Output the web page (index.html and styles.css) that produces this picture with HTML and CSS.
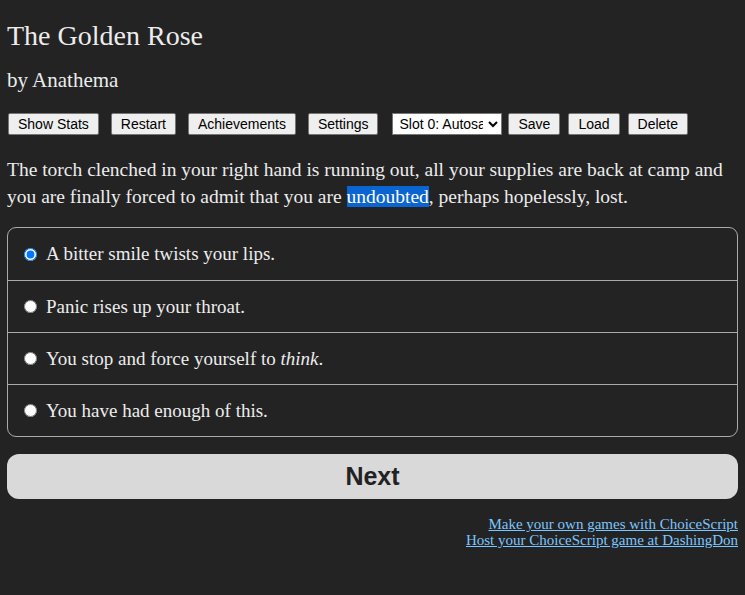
FILE: index.html
```html
<!DOCTYPE html>
<html lang="en">
<head>
    <meta charset="UTF-8">
    <meta name="viewport" content="width=device-width, initial-scale=1.0">
    <title>The Golden Rose</title>
    <link rel="stylesheet" href="styles.css">
</head>
<body>
    <div class="container">
        <h1 class="title">The Golden Rose</h1>
        <h2 class="author">by Anathema</h2>
        <div class="toolbar">
            <button>Show Stats</button>
            <button>Restart</button>
            <button>Achievements</button>
            <button class="wide">Settings</button>
            <select class="slot">
                <option>Slot 0: Autosave</option>
            </select>
            <button class="tight">Save</button>
            <button class="tight">Load</button>
            <button class="tight">Delete</button>
        </div>
        <p class="story">The torch clenched in your right hand is running out, all your supplies are back at camp and you are finally forced to admit that you are <span class="sel">undoubted</span>, perhaps hopelessly, lost.</p>
        <form class="choices">
            <label class="choice"><input type="radio" name="choice" checked><span>A bitter smile twists your lips.</span></label>
            <label class="choice"><input type="radio" name="choice"><span>Panic rises up your throat.</span></label>
            <label class="choice"><input type="radio" name="choice"><span>You stop and force yourself to <i>think</i>.</span></label>
            <label class="choice"><input type="radio" name="choice"><span>You have had enough of this.</span></label>
        </form>
        <button class="next">Next</button>
        <div class="links">
            <a href="#">Make your own games with ChoiceScript</a><br>
            <a href="#">Host your ChoiceScript game at DashingDon</a>
        </div>
    </div>
</body>
</html>
```

FILE: styles.css
```css
body {
    margin: 0;
    background-color: #232323;
    color: #ececec;
    font-family: "Liberation Serif", Georgia, serif;
}

.container {
    padding: 0 7px;
}

.title {
    font-size: 28px;
    font-weight: normal;
    margin: 0;
    padding-top: 21px;
    line-height: 30px;
}

.author {
    font-size: 21px;
    font-weight: normal;
    margin: 0;
    padding-top: 17px;
    line-height: 24px;
}

.toolbar {
    display: flex;
    align-items: center;
    padding-top: 21px;
    padding-left: 1px;
}

.toolbar button,
.toolbar select {
    font-family: Arial, "Liberation Sans", sans-serif;
    font-size: 14px;
    height: 22px;
    margin-right: 12px;
    background-color: #efefef;
    color: #000;
    border: 1px solid #767676;
    border-radius: 2px;
    padding: 0 9px;
}

.toolbar .wide {
    margin-right: 14px;
}

.toolbar select {
    width: 110px;
    padding: 0 2px;
    background-color: #fff;
    margin-right: 6px;
    border-radius: 0;
}

.toolbar .tight {
    margin-right: 8px;
}

.story {
    font-size: 19.5px;
    line-height: 27px;
    margin: 0;
    padding-top: 21px;
}

.sel {
    background-color: #0a64d2;
    color: #fff;
}

.choices {
    margin-top: 17px;
    border: 1px solid #aaa;
    border-radius: 9px;
}

.choice {
    display: flex;
    align-items: center;
    box-sizing: border-box;
    height: 52px;
    padding-left: 16px;
    font-size: 19px;
    border-top: 1px solid #aaa;
}

.choice:first-child {
    border-top: none;
}

.choice input {
    margin: 0 9px 0 0;
    width: 13px;
    height: 13px;
}

.next {
    display: block;
    width: 100%;
    height: 45px;
    margin-top: 17px;
    border: none;
    border-radius: 12px;
    background-color: #d9d9d9;
    color: #222;
    font-family: Arial, "Liberation Sans", sans-serif;
    font-weight: bold;
    font-size: 25px;
}

.links {
    text-align: right;
    padding-top: 17px;
    font-size: 15px;
    line-height: 16px;
}

.links a {
    color: #7cc6ff;
}
```
